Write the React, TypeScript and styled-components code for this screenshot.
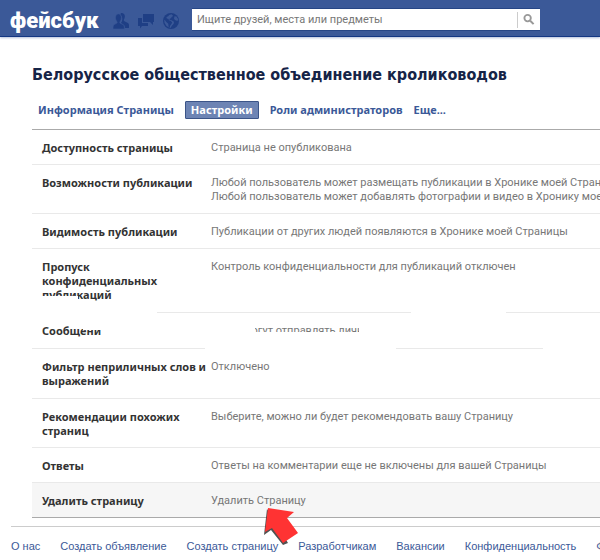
import React from "react";
import styled, { createGlobalStyle } from "styled-components";

const BLUE = "#3b5998";
const TEXT = 'Roboto, "Noto Sans", sans-serif';
const STRONG = '"Noto Sans", "DejaVu Sans Condensed", sans-serif';
const HEADING = '"DejaVu Sans Condensed", "Noto Sans", sans-serif';
const LINKS = '"Liberation Sans", Arial, sans-serif';

const GlobalStyle = createGlobalStyle`
  *, *::before, *::after { box-sizing: border-box; }
  body {
    margin: 0;
    background: #fff;
    font: 11px/14px ${TEXT};
    color: #777;
    overflow: hidden;
  }
`;

const Page = styled.div`
  overflow: hidden;
`;

const TopBar = styled.header`
  display: flex;
  align-items: center;
  height: 37px;
  padding: 0 10px;
  background: ${BLUE};
  border-bottom: 1px solid #133783;
  box-shadow: 0 1px 2px #b4c0da;
`;

const Logo = styled.a`
  width: 88px;
  margin-right: 14px;
  padding-top: 6px;
  font: 900 22px/30px Roboto, sans-serif;
  color: #fff;
  text-decoration: none;
`;

const Jewels = styled.nav`
  display: flex;
  gap: 7px;
  margin-top: 5px;
  margin-right: 12px;
`;

const JewelButton = styled.button`
  width: 18px;
  height: 18px;
  padding: 0;
  border: 0;
  background: none;
  color: #1f3f85;
  svg { display: block; }
`;

const SearchForm = styled.form`
  display: flex;
  align-items: center;
  flex: 0 1 348px;
  height: 23px;
  margin-top: 3px;
  background: #fff;
  border: 1px solid #274685;
  border-width: 1px 0 1px 0;
`;

const SearchInput = styled.input`
  flex: 1;
  min-width: 0;
  height: 21px;
  padding: 0 5px;
  border: 0;
  outline: 0;
  background: none;
  font: 11px/14px ${TEXT};
  color: #333;
  &::placeholder { color: #777; opacity: 1; }
`;

const SearchButton = styled.button`
  display: flex;
  align-items: center;
  width: 23px;
  height: 16px;
  padding: 0 5px;
  border: 0;
  border-left: 1px solid #ccc;
  background: none;
`;

const Main = styled.main`
  padding-left: 32px;
`;

const Title = styled.h1`
  margin: 0;
  padding-top: 28px;
  font: 700 16px/20px ${HEADING};
  color: #162447;
  white-space: nowrap;
`;

const Tabs = styled.nav`
  display: flex;
  gap: 11px;
  padding: 16px 6px 10px;
`;

const Tab = styled.a<{ $active?: boolean }>`
  padding: ${(p) => (p.$active ? "1px 5px" : "2px 0")};
  border: ${(p) => (p.$active ? "1px solid #3b5488" : "0")};
  border-radius: 1px;
  background: ${(p) => (p.$active ? "#6d84b4" : "none")};
  color: ${(p) => (p.$active ? "#fff" : BLUE)};
  font: 700 11px/14px ${STRONG};
  text-decoration: none;
  white-space: nowrap;
`;

const SettingsArea = styled.div`
  position: relative;
`;

const Settings = styled.table`
  width: 100%;
  table-layout: fixed;
  border-collapse: separate;
  border-spacing: 0;
  border-top: 1px solid #aaa;
  border-bottom: 1px solid #aaa;
`;

const Row = styled.tr<{ $roomy?: boolean }>`
  th, td {
    padding-top: 11px;
    padding-bottom: ${(p) => (p.$roomy ? "10px" : "9px")};
    border-bottom: 1px solid #e9e9e9;
    vertical-align: top;
  }
  &:last-child th, &:last-child td {
    border-bottom: 0;
    background: #f6f6f6;
  }
`;

const Name = styled.th`
  width: 179px;
  padding-left: 10px;
  padding-right: 4px;
  font: 700 11px/14px ${STRONG};
  color: #333;
  text-align: left;
`;

const Value = styled.td`
  padding-left: 0;
  padding-right: 0;
  white-space: nowrap;
`;

/* White-out mark lying over the table. */
const Eraser = styled.span<{ $x: number; $y: number; $w: number; $h: number }>`
  position: absolute;
  left: ${(p) => p.$x}px;
  top: ${(p) => p.$y}px;
  width: ${(p) => p.$w}px;
  height: ${(p) => p.$h}px;
  background: #fff;
`;

const Pointer = styled.svg`
  position: absolute;
  left: 230px;
  top: 377px;
`;

const Footer = styled.footer`
  display: flex;
  gap: 20px;
  margin-top: 8px;
  margin-left: 11px;
  padding: 12px 0 6px;
  border-top: 1px solid #ccc;
  font-family: ${LINKS};
`;

const FooterLink = styled.a`
  color: ${BLUE};
  text-decoration: none;
  white-space: nowrap;
`;

const FriendsIcon = () => (
  <svg width="18" height="18" viewBox="0 0 18 18" fill="currentColor" aria-hidden="true">
    <path d="M8.800 1.300c1.600-.6 3.700.3 4 2.500.2 1.500-.3 2.800-.9 3.800-.3.600 0 1.300.6 1.700l3 1.500c1.100.6 1.500 1.300 1.500 2.700v2.500h-4.100c0-1.900-.4-3-1.900-3.800L9 11.100c.9-1.300 1.400-2.700 1.300-4.300-.1-1.800-.6-3-1.800-3.800.1-.7.1-1.200.3-1.700z" />
    <path
      d="M6.300 1.900C8.200 1.800 9.400 3.300 9.400 5.600c0 1.700-.5 3.100-1.400 4.200-.4.600-.2 1.200.4 1.500l2.700 1.300c1 .6 1.300 1.500 1.300 4.400H1c0-2.900.3-3.800 1.300-4.400l2.300-1.300c.6-.3.800-.9.400-1.500C4.100 8.700 3.500 7.300 3.500 5.600c0-2.300 1-3.600 2.800-3.700z"
      stroke={BLUE}
      strokeWidth="0.600"
    />
  </svg>
);

const MessagesIcon = () => (
  <svg width="18" height="18" viewBox="0 0 18 18" fill="currentColor" aria-hidden="true">
    <path d="M6 2h11v8h-1v3l-3-3H6z" />
    <path d="M1 6h4v5h6v3H5l-2 2.500V14H1z" />
  </svg>
);

const GlobeIcon = () => (
  <svg width="18" height="18" viewBox="0 0 18 18" aria-hidden="true">
    <circle cx="9" cy="9" r="8" fill="currentColor" />
    <path
      d="M9.500 2.200l-2.300.7-1 1.300-1.800.8.400 1.500 1.800.4.200 1.300 2.100.7 1.300 1.500-.8 1.600-1.300 1.700-.4 2.500-1.200-1.800-.2-2.700-2-1.700L3 8.200l-.8-.5.3 3 2 3.200 3 1.900.9.100 1.500-2.200 1.800-2 .3-1.900-2.500-1.500-1.800-.3-.2-1 1.300-.7 1.200-1.500 1.200-.9z"
      fill={BLUE}
    />
    <path d="M12.500 4.200l1.900.3 1.500 2.300.3 1.600-1.500.4-1.800-.8-.9-1.600z" fill={BLUE} />
  </svg>
);

const SearchIcon = () => (
  <svg width="13" height="13" viewBox="0 0 13 13" fill="none" stroke="#999" aria-hidden="true">
    <circle cx="5" cy="5" r="3.500" strokeWidth="2" />
    <path d="M7.800 7.800l3.700 3.700" strokeWidth="2.200" />
  </svg>
);

const settings: { name: React.ReactNode; value: React.ReactNode; roomy?: boolean }[] = [
  { name: "Доступность страницы", value: "Страница не опубликована" },
  {
    name: "Возможности публикации",
    value: (
      <>
        Любой пользователь может размещать публикации в Хронике моей Страницы
        <br />
        Любой пользователь может добавлять фотографии и видео в Хронику моей Страницы
      </>
    ),
  },
  { name: "Видимость публикации", value: "Публикации от других людей появляются в Хронике моей Страницы" },
  {
    name: "Пропуск конфиденциальных публикаций",
    value: "Контроль конфиденциальности для публикаций отключен",
    roomy: true,
  },
  { name: "Сообщения", value: "Люди могут отправлять личные", roomy: true },
  { name: "Фильтр неприличных слов и выражений", value: "Отключено", roomy: true },
  { name: "Рекомендации похожих страниц", value: "Выберите, можно ли будет рекомендовать вашу Страницу" },
  { name: "Ответы", value: "Ответы на комментарии еще не включены для вашей Страницы" },
  { name: "Удалить страницу", value: "Удалить Страницу" },
];

const erased = [
  { x: 0, y: 167, w: 46, h: 20 },
  { x: 0, y: 173, w: 125, h: 22 },
  { x: 51, y: 190, w: 74, h: 11 },
  { x: 69, y: 195, w: 56, h: 20 },
  { x: 173, y: 190, w: 50, h: 20 },
  { x: 173, y: 203, w: 191, h: 24 },
  { x: 327, y: 190, w: 37, h: 24 },
  { x: 379, y: 180, w: 95, h: 8 },
  { x: 511, y: 216, w: 200, h: 8 },
];

const footerLinks = [
  "О нас",
  "Создать объявление",
  "Создать страницу",
  "Разработчикам",
  "Вакансии",
  "Конфиденциальность",
  "Файлы cookie",
];

export default function App() {
  return (
    <Page>
      <GlobalStyle />
      <TopBar>
        <Logo href="#">фейсбук</Logo>
        <Jewels>
          <JewelButton aria-label="Друзья"><FriendsIcon /></JewelButton>
          <JewelButton aria-label="Сообщения"><MessagesIcon /></JewelButton>
          <JewelButton aria-label="Уведомления"><GlobeIcon /></JewelButton>
        </Jewels>
        <SearchForm role="search">
          <SearchInput
            type="text"
            aria-label="Поиск"
            placeholder="Ищите друзей, места или предметы"
          />
          <SearchButton type="button" aria-label="Найти"><SearchIcon /></SearchButton>
        </SearchForm>
      </TopBar>
      <Main>
        <Title>Белорусское общественное объединение кролиководов</Title>
        <Tabs>
          <Tab href="#">Информация Страницы</Tab>
          <Tab href="#" $active>Настройки</Tab>
          <Tab href="#">Роли администраторов</Tab>
          <Tab href="#">Еще...</Tab>
        </Tabs>
        <SettingsArea>
          <Settings>
            <tbody>
              {settings.map((s, i) => (
                <Row key={i} $roomy={s.roomy}>
                  <Name scope="row">{s.name}</Name>
                  <Value>{s.value}</Value>
                </Row>
              ))}
            </tbody>
          </Settings>
          {erased.map((e, i) => (
            <Eraser key={i} $x={e.x} $y={e.y} $w={e.w} $h={e.h} />
          ))}
          <Pointer width="40" height="42" viewBox="0 0 40 42" aria-hidden="true">
            <path d="M5 3l-3 26 7-5 12 15 5-2z" fill="#333" opacity="0.850" />
            <path d="M6 2l26 4-7 6 11 15-15 10-11-15-7 4z" fill="#ff3333" />
          </Pointer>
        </SettingsArea>
      </Main>
      <Footer>
        {footerLinks.map((t) => (
          <FooterLink key={t} href="#">{t}</FooterLink>
        ))}
      </Footer>
    </Page>
  );
}
